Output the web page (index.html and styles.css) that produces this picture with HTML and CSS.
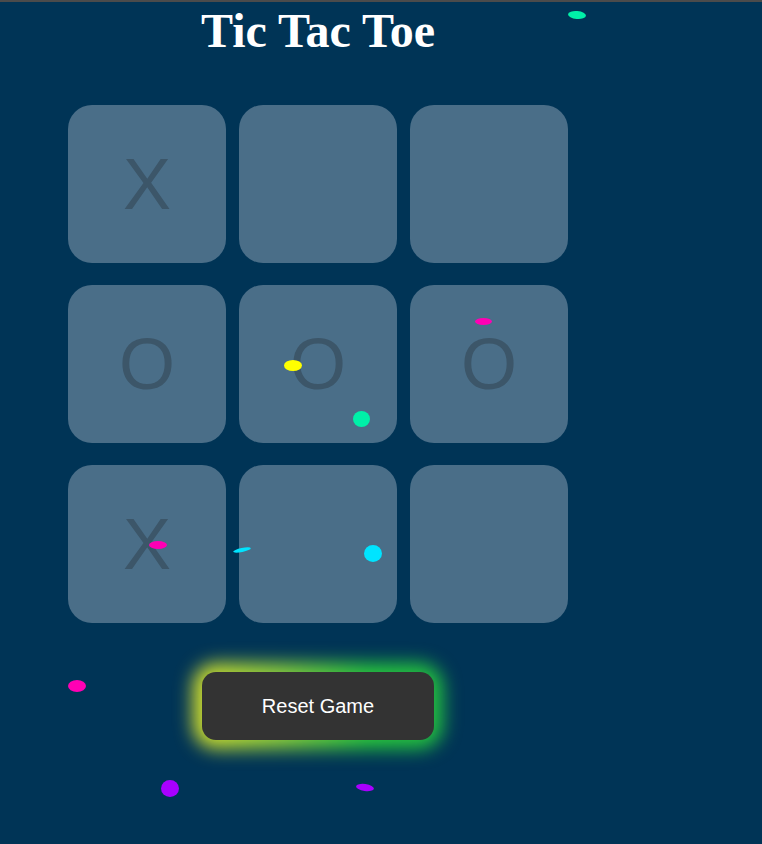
FILE: index.html
```html
<!DOCTYPE html>
<html lang="en">
<head>
<meta charset="utf-8">
<title>Tic Tac Toe</title>
<link rel="stylesheet" href="styles.css">
</head>
<body>
<main class="game">
  <h1 class="title">Tic Tac Toe</h1>
  <div class="board">
    <div class="cell">X</div>
    <div class="cell"></div>
    <div class="cell"></div>
    <div class="cell">O</div>
    <div class="cell">O</div>
    <div class="cell">O</div>
    <div class="cell">X</div>
    <div class="cell"></div>
    <div class="cell"></div>
  </div>
  <div class="actions">
    <button class="reset">Reset Game</button>
  </div>
</main>
<div class="confetti c-teal" style="left:568px;top:11px;width:18px;height:8px;transform:rotate(5deg)"></div>
<div class="confetti c-pink" style="left:475px;top:318px;width:17px;height:7px"></div>
<div class="confetti c-yellow" style="left:284px;top:360px;width:18px;height:11px"></div>
<div class="confetti c-teal" style="left:353px;top:411px;width:17px;height:16px"></div>
<div class="confetti c-pink" style="left:149px;top:541px;width:18px;height:8px"></div>
<div class="confetti c-cyan" style="left:233px;top:548px;width:18px;height:4px;transform:rotate(-12deg)"></div>
<div class="confetti c-cyan" style="left:364px;top:545px;width:18px;height:17px"></div>
<div class="confetti c-pink" style="left:68px;top:680px;width:18px;height:12px"></div>
<div class="confetti c-purple" style="left:161px;top:780px;width:18px;height:17px"></div>
<div class="confetti c-purple" style="left:356px;top:784px;width:18px;height:7px;transform:rotate(8deg)"></div>
</body>
</html>
```
FILE: styles.css
```css
html {
  background: #003456;
  border-top: 2px solid #4b4b4b;
}
body {
  margin: 0 8px 8px;
  min-height: 834px;
}
.game {
  width: 500px;
  margin-left: 60px;
  display: flex;
  flex-direction: column;
}
.title {
  margin: 0;
  padding-top: 1px;
  height: 103px;
  box-sizing: border-box;
  text-align: center;
  font-family: "Liberation Serif", serif;
  font-weight: bold;
  font-size: 48px;
  line-height: 56px;
  color: #ffffff;
}
.board {
  display: grid;
  grid-template-columns: repeat(3, 158px);
  grid-auto-rows: 158px;
  column-gap: 13px;
  row-gap: 22px;
}
.cell {
  background: #4a6e88;
  border-radius: 24px;
  display: flex;
  align-items: center;
  justify-content: center;
  font-family: "Liberation Sans", Arial, sans-serif;
  font-size: 72px;
  color: #3c5669;
}
.actions {
  display: flex;
  justify-content: center;
  padding-top: 49px;
  isolation: isolate;
}
.reset {
  position: relative;
  width: 232px;
  height: 68px;
  border: none;
  border-radius: 14px;
  background: #333333;
  color: #ffffff;
  font-family: "Liberation Sans", Arial, sans-serif;
  font-size: 20px;
}
.reset::before {
  content: "";
  position: absolute;
  inset: -9px;
  border-radius: 24px;
  background: linear-gradient(90deg, #d8e02c 0%, #8ed23a 35%, #28c83c 70%, #22c040 100%);
  filter: blur(9px);
  z-index: -1;
}
.confetti {
  position: absolute;
  border-radius: 50%;
}
.c-teal { background: #00f0a8; }
.c-pink { background: #ff00b4; }
.c-yellow { background: #ffff00; }
.c-cyan { background: #00e4ff; }
.c-purple { background: #a800ff; }
```
